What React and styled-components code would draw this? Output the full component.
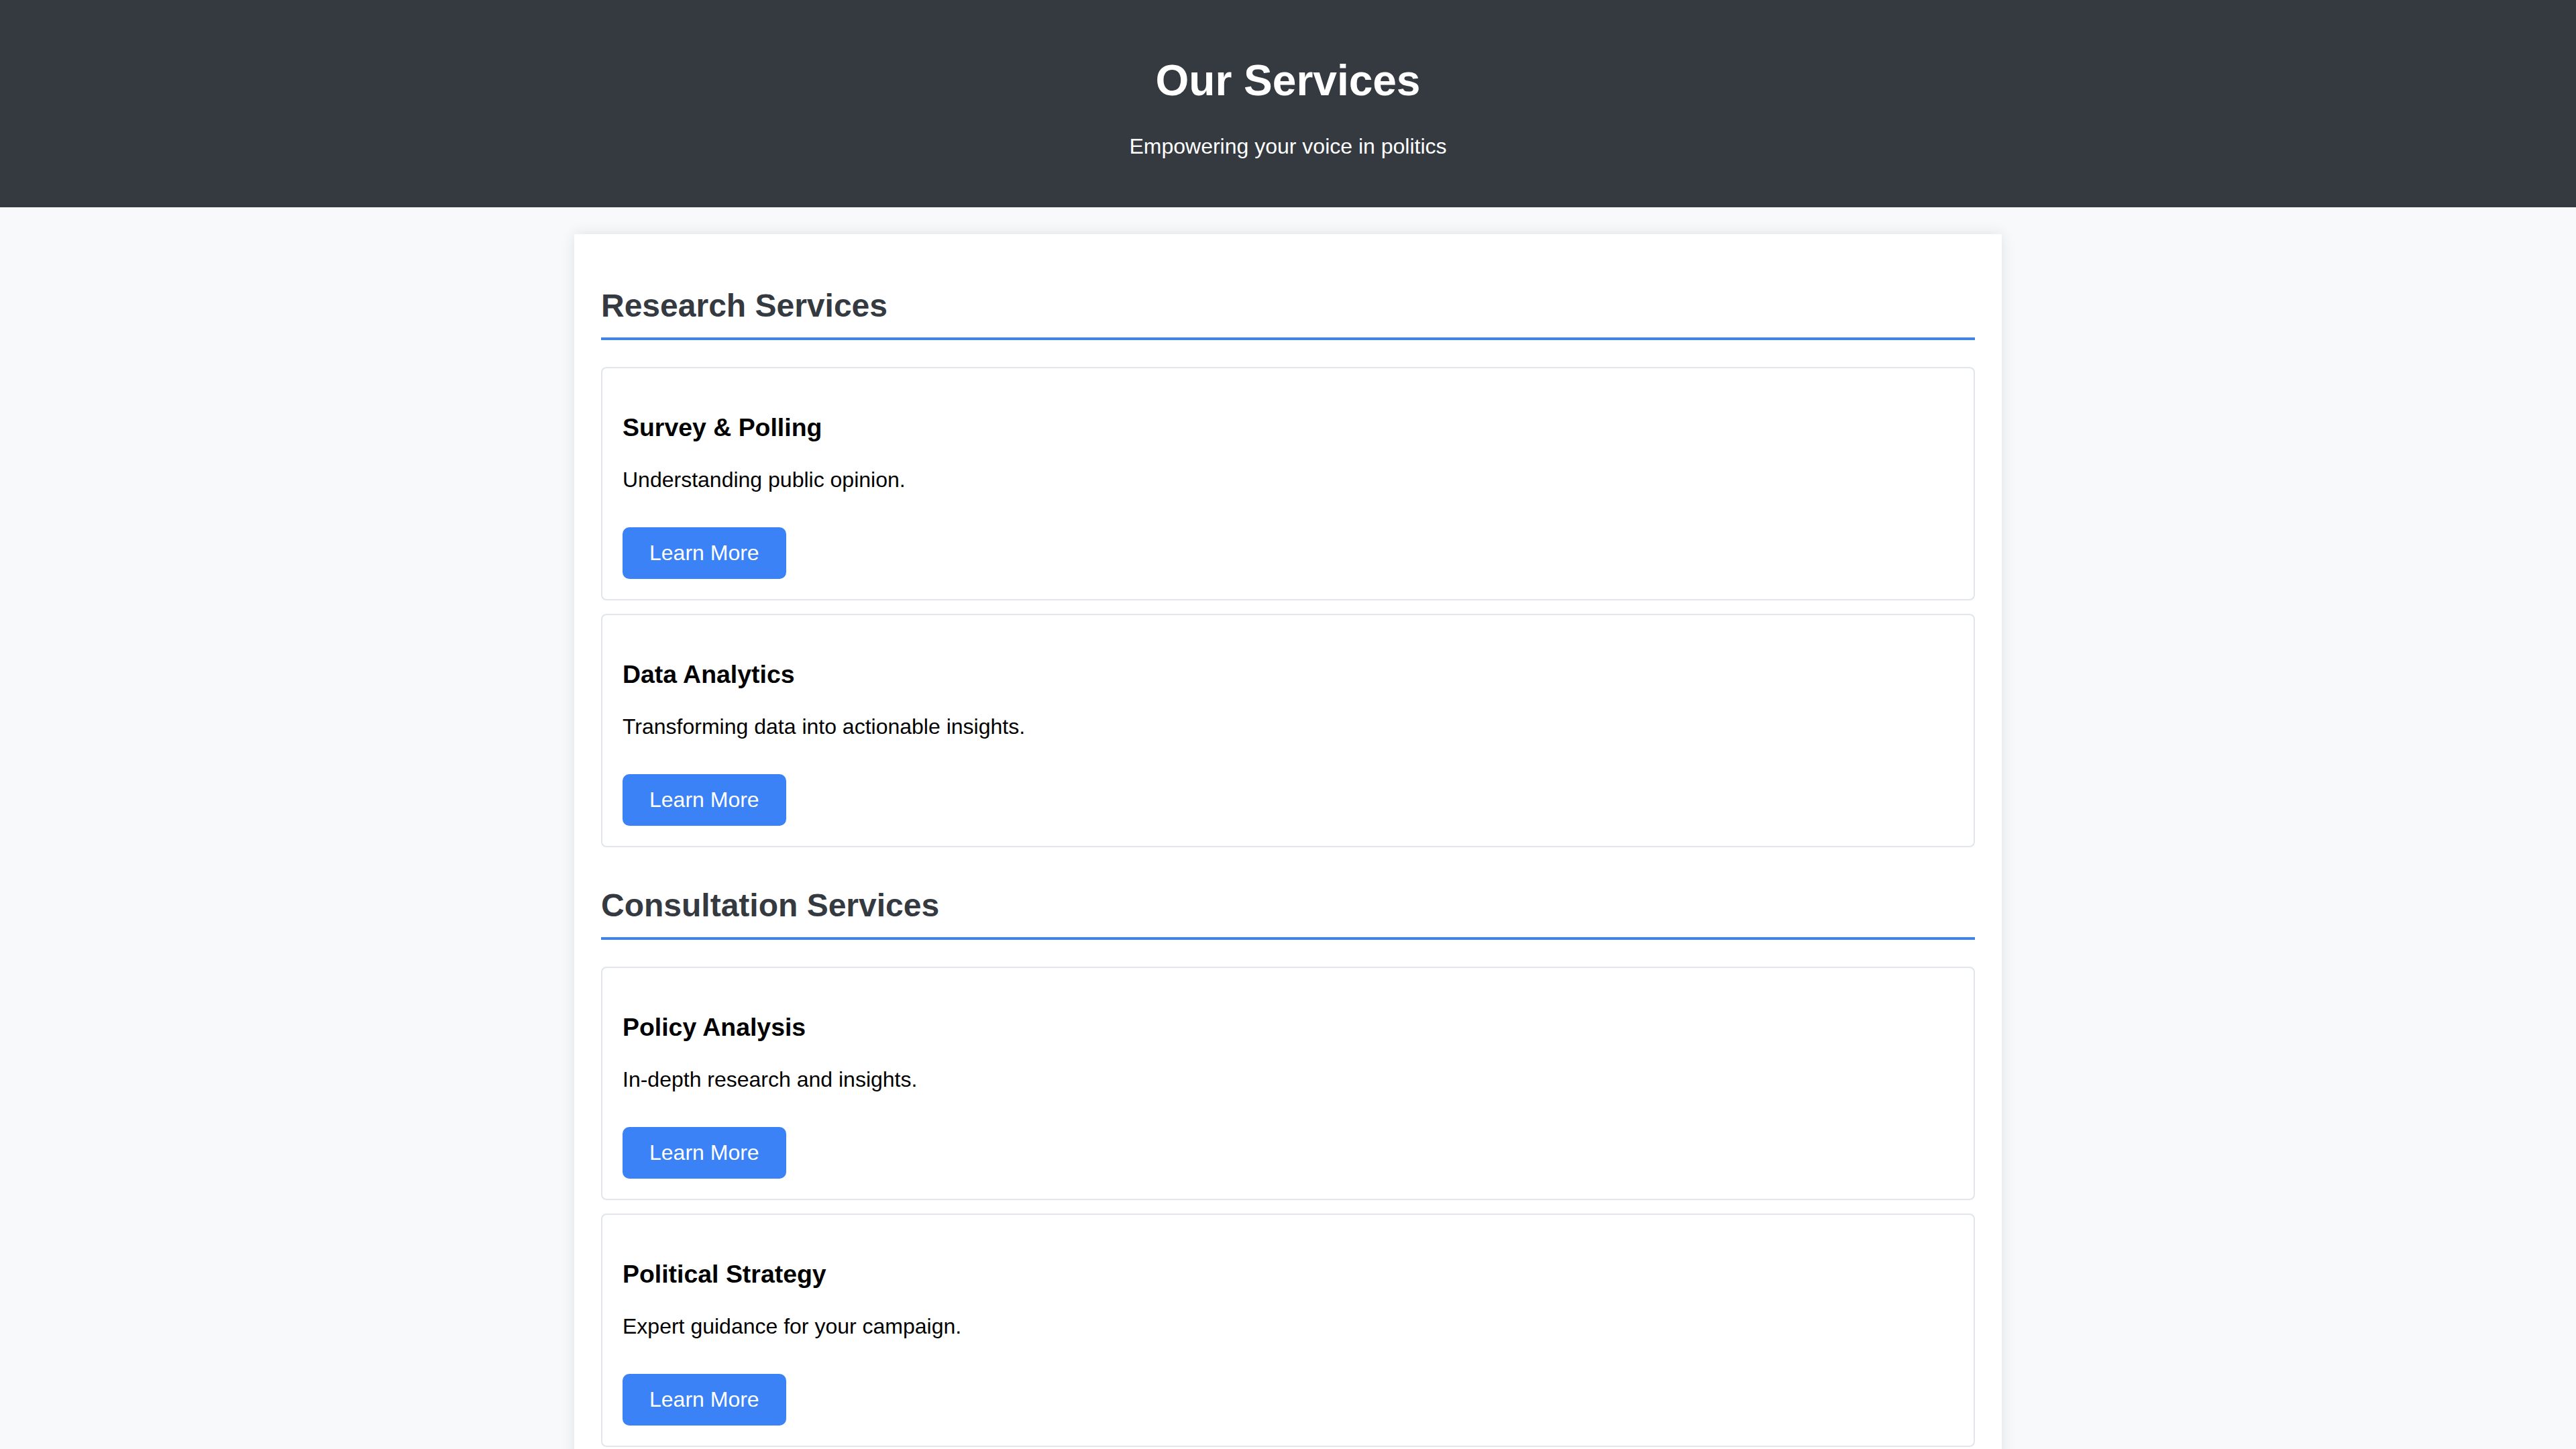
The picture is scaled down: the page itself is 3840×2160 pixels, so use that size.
import React from "react";
import styled, { createGlobalStyle } from "styled-components";

const sections = [
  {
    title: "Research Services",
    items: [
      { name: "Survey & Polling", text: "Understanding public opinion." },
      { name: "Data Analytics", text: "Transforming data into actionable insights." },
    ],
  },
  {
    title: "Consultation Services",
    items: [
      { name: "Policy Analysis", text: "In-depth research and insights." },
      { name: "Political Strategy", text: "Expert guidance for your campaign." },
    ],
  },
];

const GlobalStyle = createGlobalStyle`
  body {
    margin: 0;
    background: #f8f9fa;
    font-family: "Liberation Sans", Arial, Helvetica, sans-serif;
    font-size: 32px;
    color: #000;
  }
`;

const App = () => {
  return (
    <>
      <GlobalStyle />
      <Header>
        <Title>Our Services</Title>
        <Tagline>Empowering your voice in politics</Tagline>
      </Header>

      <Container>
        {sections.map((section) => (
          <Section key={section.title}>
            <SectionTitle>{section.title}</SectionTitle>
            {section.items.map((item) => (
              <ServiceCard key={item.name}>
                <ServiceName>{item.name}</ServiceName>
                <ServiceText>{item.text}</ServiceText>
                <LearnButton href="#">Learn More</LearnButton>
              </ServiceCard>
            ))}
          </Section>
        ))}
      </Container>
    </>
  );
};

export default App;

const Header = styled.header`
  background: #343a40;
  color: #fff;
  text-align: center;
  padding: 40px;
`;

const Title = styled.h1`
  margin: 43px 0;
  font-size: 64px;
  font-weight: 700;
`;

const Tagline = styled.p`
  margin: 32px 0;
  font-size: 32px;
`;

const Container = styled.main`
  box-sizing: border-box;
  width: 2128px;
  max-width: 100%;
  margin: 40px auto;
  padding: 40px;
  background: #fff;
  box-shadow: 0 0 20px rgba(0, 0, 0, 0.1);
`;

const Section = styled.section`
  display: flow-root;
`;

const SectionTitle = styled.h2`
  margin: 39px 0 40px;
  padding-bottom: 20px;
  border-bottom: 4px solid #3b82f6;
  font-size: 48px;
  font-weight: 700;
  color: #343a40;
`;

const ServiceCard = styled.div`
  border: 2px solid #e2e5e9;
  border-radius: 8px;
  padding: 30px;
  margin-bottom: 20px;
`;

const ServiceName = styled.h3`
  margin: 37.44px 0;
  font-size: 37.44px;
  font-weight: 700;
  color: #000;
`;

const ServiceText = styled.p`
  margin: 32px 0;
  font-size: 32px;
  color: #000;
`;

const LearnButton = styled.a`
  display: inline-block;
  margin-top: 20px;
  padding: 20px 40px;
  border-radius: 10px;
  background: #3b82f6;
  color: #fff;
  font-size: 32px;
  text-decoration: none;
`;
